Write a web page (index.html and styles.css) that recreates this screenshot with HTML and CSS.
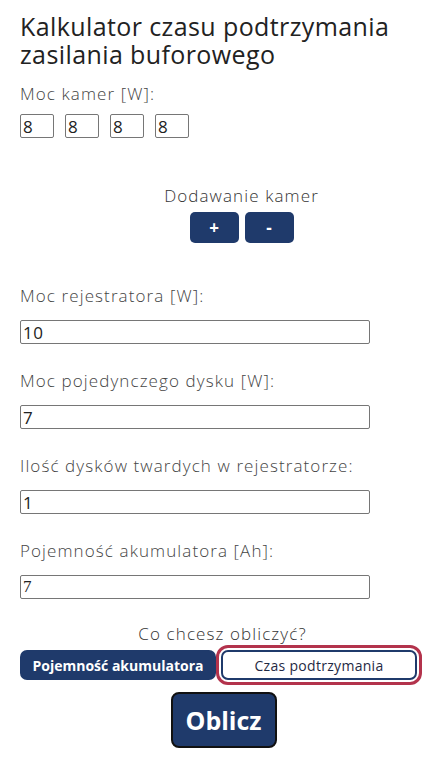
FILE: index.html
```html
<!DOCTYPE html>
<html lang="pl">
<head>
    <meta charset="UTF-8">
    <meta name="viewport" content="width=device-width, initial-scale=1.0">
    <title>Kalkulator czasu podtrzymania</title>
    <link rel="stylesheet" href="styles.css">
</head>
<body>
    <div class="calculator">
        <h1>Kalkulator czasu podtrzymania zasilania buforowego</h1>

        <label class="field-label">Moc kamer [W]:</label>
        <div class="cameras">
            <input type="text" class="camera-input" value="8">
            <input type="text" class="camera-input" value="8">
            <input type="text" class="camera-input" value="8">
            <input type="text" class="camera-input" value="8">
        </div>

        <div class="camera-controls">
            <p>Dodawanie kamer</p>
            <div class="camera-buttons">
                <button class="small-btn">+</button>
                <button class="small-btn">-</button>
            </div>
        </div>

        <div class="field">
            <label class="field-label">Moc rejestratora [W]:</label>
            <input type="text" class="wide-input" value="10">
        </div>
        <div class="field">
            <label class="field-label">Moc pojedynczego dysku [W]:</label>
            <input type="text" class="wide-input" value="7">
        </div>
        <div class="field">
            <label class="field-label">Ilość dysków twardych w rejestratorze:</label>
            <input type="text" class="wide-input" value="1">
        </div>
        <div class="field">
            <label class="field-label">Pojemność akumulatora [Ah]:</label>
            <input type="text" class="wide-input serif-input" value="7">
        </div>

        <div class="mode">
            <p>Co chcesz obliczyć?</p>
            <div class="mode-buttons">
                <button class="mode-btn active">Pojemność akumulatora</button>
                <button class="mode-btn focused">Czas podtrzymania</button>
            </div>
            <button class="calc-btn">Oblicz</button>
        </div>
    </div>
</body>
</html>
```

FILE: styles.css
```css
* {
    box-sizing: border-box;
    margin: 0;
    padding: 0;
}
body {
    font-family: 'Open Sans', sans-serif;
    color: #444;
    background-color: #fff;
    padding: 0 20px;
}
h1 {
    font-size: 25px;
    font-weight: 500;
    line-height: 28px;
    letter-spacing: 0.4px;
    color: #222;
    margin-top: 12px;
    margin-bottom: 16px;
}
.field-label {
    display: block;
    font-size: 17px;
    font-weight: 300;
    line-height: 20px;
    letter-spacing: 1.1px;
    color: #444;
}
.cameras {
    display: flex;
    gap: 11px;
    margin-top: 10px;
}
input {
    font-family: inherit;
    font-size: 17px;
    letter-spacing: 0.5px;
    color: #222;
    border: 1px solid #767676;
    border-radius: 2px;
    padding: 0 2px;
    height: 24px;
}
.camera-input {
    width: 34px;
}
.camera-controls {
    text-align: center;
    padding-left: 46px;
    margin-top: 48px;
}
.camera-controls p,
.mode p {
    font-size: 17px;
    font-weight: 300;
    line-height: 20px;
    letter-spacing: 1.1px;
    color: #333;
}
.camera-buttons {
    display: flex;
    justify-content: center;
    gap: 6px;
    margin-top: 6px;
}
.small-btn {
    width: 49px;
    height: 31px;
    background-color: #1f3a6b;
    color: #fff;
    border: none;
    border-radius: 5px;
    font-family: inherit;
    font-size: 17px;
    font-weight: 700;
}
.field {
    margin-top: 43px;
}
.field + .field {
    margin-top: 27px;
}
.wide-input {
    display: block;
    width: 350px;
    margin-top: 14px;
}
.serif-input {
    font-family: 'Liberation Serif', serif;
    letter-spacing: 0;
}
.mode {
    text-align: center;
    margin-top: 25px;
}
.mode p {
    padding-left: 8px;
}
.mode-buttons {
    display: flex;
    gap: 5px;
    margin-top: 6px;
}
.mode-btn {
    width: 199px;
    height: 30px;
    border-radius: 7px;
    font-family: inherit;
    font-size: 14px;
    border: 2px solid #1f3a6b;
}
.mode-btn.active {
    background-color: #1f3a6b;
    color: #fff;
    font-weight: 700;
}
.mode-btn.focused {
    background-color: #fff;
    color: #1f2a44;
    letter-spacing: 0.3px;
    outline: 3px solid #b3334c;
    outline-offset: 2px;
}
.calc-btn {
    width: 106px;
    height: 56px;
    margin-top: 12px;
    margin-left: 10px;
    background-color: #1f3a6b;
    color: #fff;
    border: 2px solid #111;
    border-radius: 8px;
    font-family: inherit;
    font-size: 25px;
    font-weight: 700;
}
```
